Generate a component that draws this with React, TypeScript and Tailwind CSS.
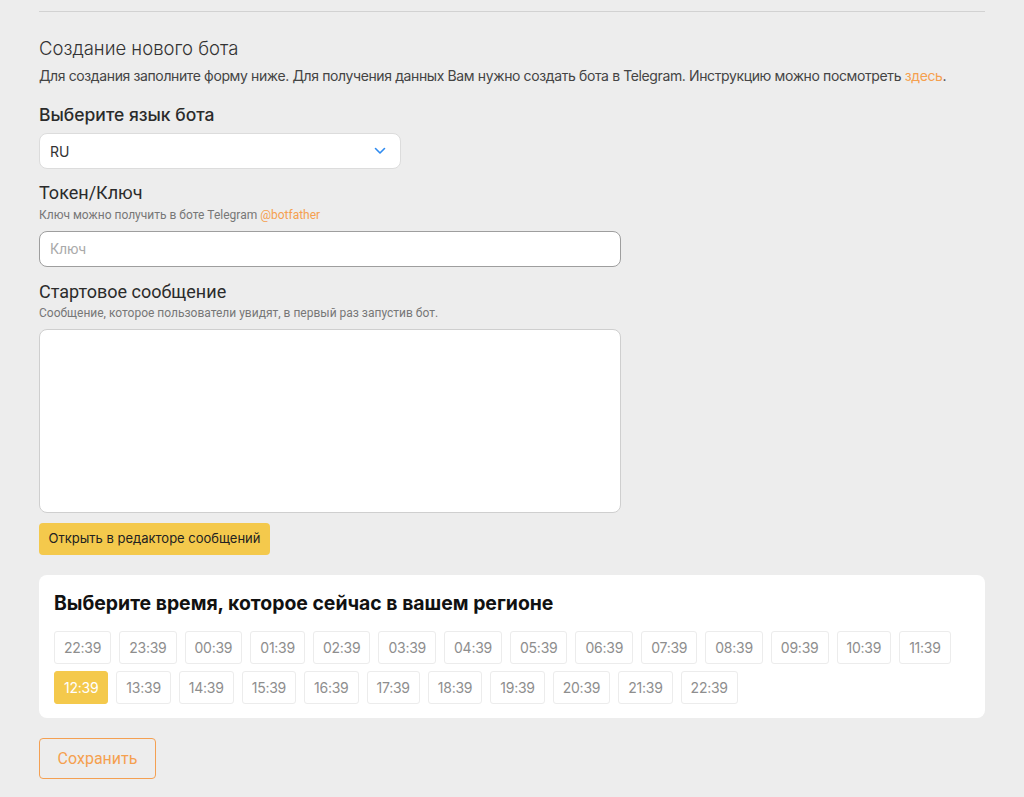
import React from "react";

const times = [
  "22:39", "23:39", "00:39", "01:39", "02:39", "03:39", "04:39", "05:39", "06:39", "07:39", "08:39", "09:39", "10:39", "11:39",
  "12:39", "13:39", "14:39", "15:39", "16:39", "17:39", "18:39", "19:39", "20:39", "21:39", "22:39",
];

export default function App() {
  const [selected, setSelected] = React.useState(14);

  return (
    <div className="min-h-[797px] bg-[#ededed] px-[39px] pt-[11px] pb-6 font-['Inter','Noto_Sans',sans-serif] text-[#333]">
      <div className="border-t border-[#d2d2d2]" />

      <h2 className="mt-[24px] text-[18.5px] font-light leading-[24px] text-[#333]">Создание нового бота</h2>
      <p className="mt-[6px] text-[14px] leading-[20px] tracking-[-0.38px] text-[#444]">
        Для создания заполните форму ниже. Для получения данных Вам нужно создать бота в Telegram. Инструкцию можно посмотреть{" "}
        <a className="text-[#f5a04f]">здесь</a>.
      </p>

      <div className="mt-[17px] text-[17.5px] font-medium leading-[24px] text-[#2b2b2b]">Выберите язык бота</div>
      <div className="mt-[6px] flex h-[36px] w-[362px] items-center justify-between rounded-[8px] border border-[#dcdcdc] bg-white pl-[10px] pr-[14px] text-[14px] text-[#333]">
        <span>RU</span>
        <svg width="12" height="8" viewBox="0 0 12 8" fill="none">
          <path d="M1.5 1.5L6 6L10.5 1.5" stroke="#2f8bf0" strokeWidth="1.6" strokeLinecap="round" strokeLinejoin="round" />
        </svg>
      </div>

      <div className="mt-[12px] font-['Roboto',sans-serif] text-[18px] leading-[24px] text-[#2b2b2b]">Токен/Ключ</div>
      <p className="mt-[2px] font-['Roboto',sans-serif] text-[12px] leading-[16px] text-[#777]">
        Ключ можно получить в боте Telegram <a className="text-[#f5a04f]">@botfather</a>
      </p>
      <input
        autoFocus
        placeholder="Ключ"
        className="mt-[8px] block h-[36px] w-[582px] rounded-[8px] border border-[#9e9e9e] bg-white px-[10px] font-['Roboto',sans-serif] text-[14px] text-[#333] outline-none placeholder:text-[#aaa]"
      />

      <div className="mt-[13px] font-['Roboto',sans-serif] text-[18px] leading-[24px] text-[#2b2b2b]">Стартовое сообщение</div>
      <p className="mt-[1px] font-['Roboto',sans-serif] text-[12px] leading-[16px] text-[#777]">
        Сообщение, которое пользователи увидят, в первый раз запустив бот.
      </p>
      <textarea className="mt-[8px] block h-[184px] w-[582px] resize-none rounded-[8px] border border-[#cfcfcf] bg-white p-[10px] text-[14px] outline-none" />

      <button className="mt-[10px] flex h-[32px] w-[231px] items-center justify-center rounded-[4px] bg-[#f4c94c] text-[13px] text-[#222]">
        Открыть в редакторе сообщений
      </button>

      <div className="mt-[20px] rounded-[8px] bg-white pb-[14px] pl-[15px] pr-[15px] pt-[16px]">
        <h3 className="text-[19.4px] font-bold leading-[24px] text-[#111]">Выберите время, которое сейчас в вашем регионе</h3>
        <div className="mt-[16px] flex flex-wrap gap-x-[8px] gap-y-[7px]">
          {times.map((t, i) => (
            <button
              key={i}
              onClick={() => setSelected(i)}
              className={
                i === selected
                  ? "h-[33px] rounded-[3px] border border-[#f4c94c] bg-[#f4c94c] px-[9px] text-[14px] tracking-[-0.25px] text-white"
                  : "h-[33px] rounded-[3px] border border-[#ececec] bg-white px-[9px] text-[14px] tracking-[-0.25px] text-[#8e8e8e]"
              }
            >
              {t}
            </button>
          ))}
        </div>
      </div>

      <button className="mt-[20px] flex h-[41px] w-[117px] items-center justify-center rounded-[4px] border border-[#f4a052] font-['Roboto',sans-serif] text-[16px] text-[#f5a04f]">
        Сохранить
      </button>
    </div>
  );
}
